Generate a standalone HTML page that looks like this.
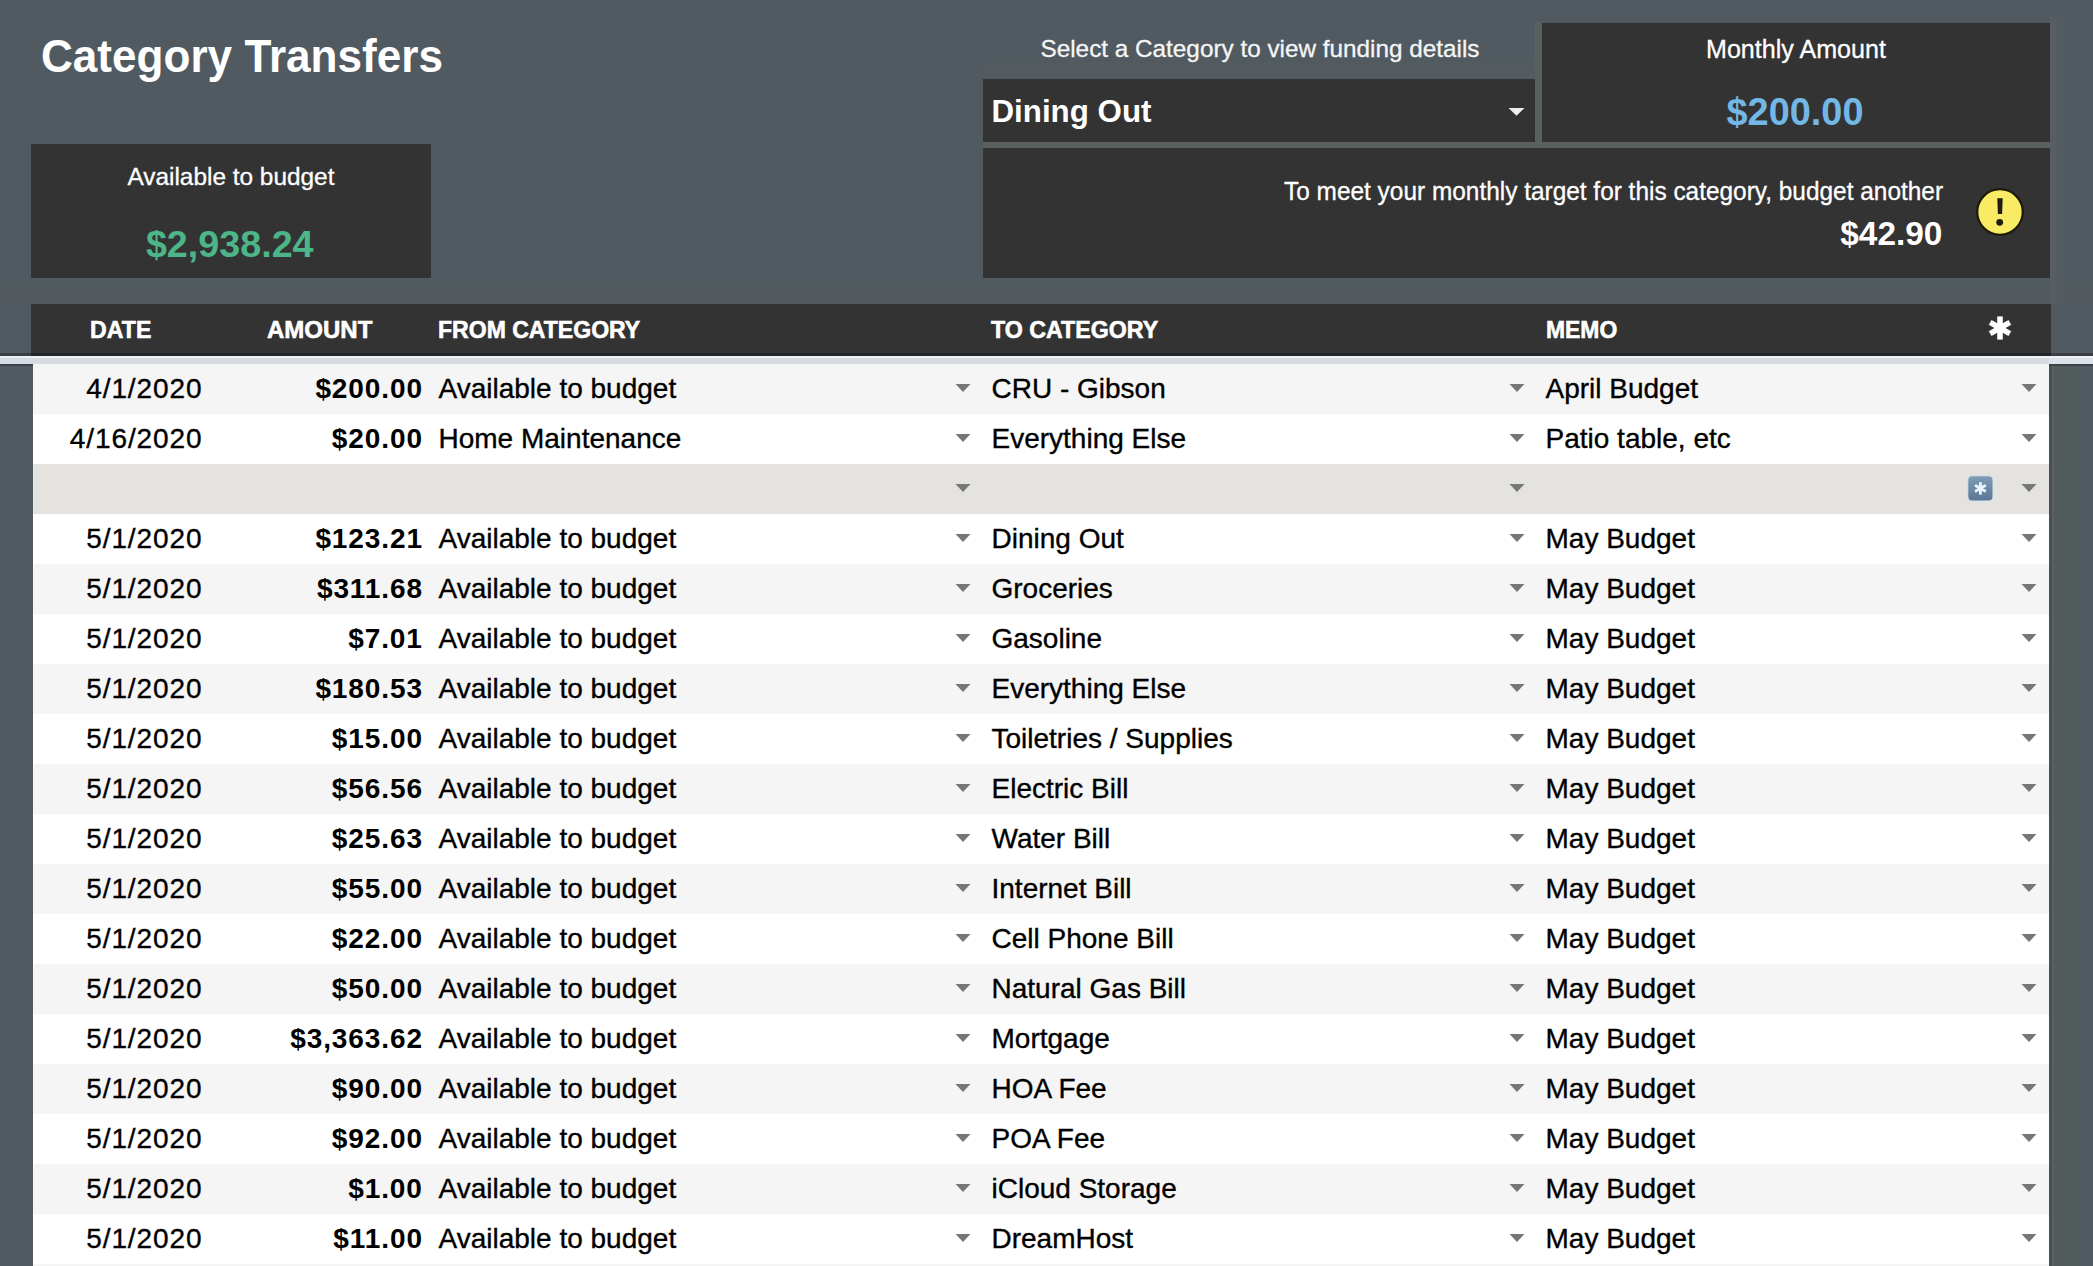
<!DOCTYPE html>
<html><head><meta charset="utf-8"><style>
html,body{margin:0;padding:0;}
body{width:2093px;height:1266px;background:#525a61;position:relative;overflow:hidden;font-family:"Liberation Sans",sans-serif;}
.t{position:absolute;white-space:nowrap;}
</style></head><body>
<div style="position:absolute;left:0px;top:286px;width:2093px;height:18px;background:#525a5e;"></div>
<div class="t" style="left:40.60px;top:33.84px;font-size:45.9px;line-height:45.9px;font-weight:bold;color:#ffffff;transform:scaleX(0.9609);transform-origin:0 0;">Category Transfers</div>
<div style="position:absolute;left:31px;top:144px;width:400px;height:134px;background:#333333;"></div>
<div class="t" style="left:127.42px;top:164.94px;font-size:24.4px;line-height:24.4px;font-weight:normal;color:#ffffff;-webkit-text-stroke:0.3px #fff;">Available to budget</div>
<div class="t" style="left:145.92px;top:225.88px;font-size:37.7px;line-height:37.7px;font-weight:bold;color:#4cb689;">$2,938.24</div>
<div style="position:absolute;left:983px;top:62px;width:552px;height:16px;background:#535b5e;"></div>
<div class="t" style="left:1040.51px;top:37.43px;font-size:24.3px;line-height:24.3px;font-weight:normal;color:#f4f6f6;-webkit-text-stroke:0.3px #f4f6f6;">Select a Category to view funding details</div>
<div style="position:absolute;left:2050px;top:17px;width:6px;height:287px;background:#585f64;"></div>
<div style="position:absolute;left:2056px;top:17px;width:8px;height:287px;background:#525b5e;"></div>
<div style="position:absolute;left:1535px;top:22px;width:7px;height:126px;background:#596061;"></div>
<div style="position:absolute;left:983px;top:141px;width:1067px;height:7px;background:#5a5f60;"></div>
<div style="position:absolute;left:983px;top:78.5px;width:552px;height:63.0px;background:#333333;"></div>
<div class="t" style="left:991.50px;top:95.50px;font-size:31.3px;line-height:31.3px;font-weight:bold;color:#ffffff;">Dining Out</div>
<svg style="position:absolute;left:1508px;top:108px" width="18" height="9"><path d="M0.5 0 L16.5 0 L8.5 7.8 Z" fill="#eeeeee"/></svg>
<div style="position:absolute;left:1541.7px;top:22.5px;width:508.29999999999995px;height:119.0px;background:#333333;"></div>
<div class="t" style="left:1706.02px;top:37.35px;font-size:25.1px;line-height:25.1px;font-weight:normal;color:#ffffff;-webkit-text-stroke:0.3px #fff;">Monthly Amount</div>
<div class="t" style="left:1726.50px;top:93.91px;font-size:37.9px;line-height:37.9px;font-weight:bold;color:#72b7e6;">$200.00</div>
<div style="position:absolute;left:983px;top:148px;width:1067px;height:130px;background:#333333;"></div>
<div class="t" style="left:1283.90px;top:178.66px;font-size:25.2px;line-height:25.2px;font-weight:normal;color:#ffffff;transform:scaleX(0.9692);transform-origin:0 0;-webkit-text-stroke:0.3px #fff;">To meet your monthly target for this category, budget another</div>
<div class="t" style="left:1840.30px;top:217.32px;font-size:33.4px;line-height:33.4px;font-weight:bold;color:#ffffff;">$42.90</div>
<svg style="position:absolute;left:1974px;top:186px" width="52" height="52" viewBox="0 0 52 52"><circle cx="26" cy="26" r="22.8" fill="#f9eb63" stroke="#1f1b08" stroke-width="2.3"/><path d="M23.3 12.2 L28.7 12.2 L28.1 27.9 L23.9 27.9 Z" fill="#1e1c10"/><circle cx="25.7" cy="36.3" r="3.4" fill="#1e1c10"/></svg>
<div style="position:absolute;left:31px;top:304px;width:2020px;height:49px;background:#333333;"></div>
<div class="t" style="left:89.60px;top:317.89px;font-size:24.1px;line-height:24.1px;font-weight:bold;color:#ffffff;transform:scaleX(0.9614);transform-origin:0 0;-webkit-text-stroke:0.6px #fff;">DATE</div>
<div class="t" style="left:266.60px;top:317.89px;font-size:24.1px;line-height:24.1px;font-weight:bold;color:#ffffff;transform:scaleX(0.9962);transform-origin:0 0;-webkit-text-stroke:0.6px #fff;">AMOUNT</div>
<div class="t" style="left:437.50px;top:317.89px;font-size:24.1px;line-height:24.1px;font-weight:bold;color:#ffffff;transform:scaleX(0.9561);transform-origin:0 0;-webkit-text-stroke:0.6px #fff;">FROM CATEGORY</div>
<div class="t" style="left:991.40px;top:317.89px;font-size:24.1px;line-height:24.1px;font-weight:bold;color:#ffffff;transform:scaleX(0.9629);transform-origin:0 0;-webkit-text-stroke:0.6px #fff;">TO CATEGORY</div>
<div class="t" style="left:1546.00px;top:317.89px;font-size:24.1px;line-height:24.1px;font-weight:bold;color:#ffffff;transform:scaleX(0.9500);transform-origin:0 0;-webkit-text-stroke:0.6px #fff;">MEMO</div>
<svg style="position:absolute;left:1987px;top:315.2px" width="26" height="26" viewBox="0 0 26 26"><g stroke="#fff" stroke-width="5.6" stroke-linecap="butt"><line x1="13" y1="1.4" x2="13" y2="24.6"/><line x1="3.2" y1="7.4" x2="22.8" y2="18.6"/><line x1="3.2" y1="18.6" x2="22.8" y2="7.4"/></g></svg>
<div style="position:absolute;left:0px;top:353px;width:2093px;height:3px;background:#3a3f44;"></div>
<div style="position:absolute;left:31px;top:353px;width:2020px;height:3px;background:#222528;"></div>
<div style="position:absolute;left:0px;top:356px;width:2093px;height:2px;background:#eef0f4;"></div>
<div style="position:absolute;left:0px;top:358px;width:2093px;height:6px;background:#d7dbe0;"></div>
<div style="position:absolute;left:0px;top:358px;width:33px;height:6px;background:#d6dce4;"></div>
<div style="position:absolute;left:2049px;top:358px;width:44px;height:6px;background:#dde2ea;"></div>
<div style="position:absolute;left:0px;top:364px;width:33px;height:2px;background:#3c4249;"></div>
<div style="position:absolute;left:2049px;top:364px;width:44px;height:2px;background:#3c4249;"></div>
<div style="position:absolute;left:2049px;top:366px;width:3px;height:900px;background:#475053;"></div>
<div style="position:absolute;left:2052px;top:366px;width:2px;height:900px;background:#59625f;"></div>
<div style="position:absolute;left:2054px;top:366px;width:26px;height:900px;background:#525b5b;"></div>
<div style="position:absolute;left:33px;top:364px;width:2016px;height:902px;background:#ffffff;"></div>
<div style="position:absolute;left:33px;top:364px;width:2016px;height:50px;background:#f5f5f5;"></div>
<div class="t" style="left:86.24px;top:374.59px;font-size:28.0px;line-height:28.0px;font-weight:normal;color:#000;-webkit-text-stroke:0.35px #000;letter-spacing:0.9px;">4/1/2020</div>
<div class="t" style="left:315.38px;top:374.59px;font-size:28.0px;line-height:28.0px;font-weight:bold;color:#000;letter-spacing:0.9px;">$200.00</div>
<div class="t" style="left:438.50px;top:374.59px;font-size:28.0px;line-height:28.0px;font-weight:normal;color:#000;-webkit-text-stroke:0.35px #000;">Available to budget</div>
<div class="t" style="left:991.50px;top:374.59px;font-size:28.0px;line-height:28.0px;font-weight:normal;color:#000;-webkit-text-stroke:0.35px #000;">CRU - Gibson</div>
<div class="t" style="left:1545.50px;top:374.59px;font-size:28.0px;line-height:28.0px;font-weight:normal;color:#000;-webkit-text-stroke:0.35px #000;">April Budget</div>
<svg style="position:absolute;left:954.8px;top:384px" width="16" height="9"><path d="M0.5 0 L15.5 0 L8 8 Z" fill="#777777"/></svg>
<svg style="position:absolute;left:1509px;top:384px" width="16" height="9"><path d="M0.5 0 L15.5 0 L8 8 Z" fill="#777777"/></svg>
<svg style="position:absolute;left:2021px;top:384px" width="16" height="9"><path d="M0.5 0 L15.5 0 L8 8 Z" fill="#777777"/></svg>
<div class="t" style="left:69.80px;top:424.59px;font-size:28.0px;line-height:28.0px;font-weight:normal;color:#000;-webkit-text-stroke:0.35px #000;letter-spacing:0.9px;">4/16/2020</div>
<div class="t" style="left:331.82px;top:424.59px;font-size:28.0px;line-height:28.0px;font-weight:bold;color:#000;letter-spacing:0.9px;">$20.00</div>
<div class="t" style="left:438.50px;top:424.59px;font-size:28.0px;line-height:28.0px;font-weight:normal;color:#000;-webkit-text-stroke:0.35px #000;">Home Maintenance</div>
<div class="t" style="left:991.50px;top:424.59px;font-size:28.0px;line-height:28.0px;font-weight:normal;color:#000;-webkit-text-stroke:0.35px #000;">Everything Else</div>
<div class="t" style="left:1545.50px;top:424.59px;font-size:28.0px;line-height:28.0px;font-weight:normal;color:#000;-webkit-text-stroke:0.35px #000;">Patio table, etc</div>
<svg style="position:absolute;left:954.8px;top:434px" width="16" height="9"><path d="M0.5 0 L15.5 0 L8 8 Z" fill="#777777"/></svg>
<svg style="position:absolute;left:1509px;top:434px" width="16" height="9"><path d="M0.5 0 L15.5 0 L8 8 Z" fill="#777777"/></svg>
<svg style="position:absolute;left:2021px;top:434px" width="16" height="9"><path d="M0.5 0 L15.5 0 L8 8 Z" fill="#777777"/></svg>
<div style="position:absolute;left:33px;top:464px;width:2016px;height:50px;background:#e5e3e0;"></div>
<svg style="position:absolute;left:954.8px;top:484px" width="16" height="9"><path d="M0.5 0 L15.5 0 L8 8 Z" fill="#777777"/></svg>
<svg style="position:absolute;left:1509px;top:484px" width="16" height="9"><path d="M0.5 0 L15.5 0 L8 8 Z" fill="#777777"/></svg>
<svg style="position:absolute;left:2021px;top:484px" width="16" height="9"><path d="M0.5 0 L15.5 0 L8 8 Z" fill="#777777"/></svg>
<svg style="position:absolute;left:1967px;top:475px" width="27" height="27" viewBox="0 0 27 27"><defs><linearGradient id="bg" x1="0" y1="0" x2="0" y2="1"><stop offset="0" stop-color="#7f9cb9"/><stop offset="1" stop-color="#5b7694"/></linearGradient></defs><rect x="0.8" y="0.8" width="25.2" height="25.2" rx="4" fill="url(#bg)" stroke="#d7e4ec" stroke-width="1"/><g stroke="#e8f6fa" stroke-width="2.8" stroke-linecap="butt"><line x1="13.4" y1="7.2" x2="13.4" y2="19.6"/><line x1="8.0" y1="10.3" x2="18.8" y2="16.5"/><line x1="8.0" y1="16.5" x2="18.8" y2="10.3"/></g></svg>
<div class="t" style="left:86.24px;top:524.59px;font-size:28.0px;line-height:28.0px;font-weight:normal;color:#000;-webkit-text-stroke:0.35px #000;letter-spacing:0.9px;">5/1/2020</div>
<div class="t" style="left:315.38px;top:524.59px;font-size:28.0px;line-height:28.0px;font-weight:bold;color:#000;letter-spacing:0.9px;">$123.21</div>
<div class="t" style="left:438.50px;top:524.59px;font-size:28.0px;line-height:28.0px;font-weight:normal;color:#000;-webkit-text-stroke:0.35px #000;">Available to budget</div>
<div class="t" style="left:991.50px;top:524.59px;font-size:28.0px;line-height:28.0px;font-weight:normal;color:#000;-webkit-text-stroke:0.35px #000;">Dining Out</div>
<div class="t" style="left:1545.50px;top:524.59px;font-size:28.0px;line-height:28.0px;font-weight:normal;color:#000;-webkit-text-stroke:0.35px #000;">May Budget</div>
<svg style="position:absolute;left:954.8px;top:534px" width="16" height="9"><path d="M0.5 0 L15.5 0 L8 8 Z" fill="#777777"/></svg>
<svg style="position:absolute;left:1509px;top:534px" width="16" height="9"><path d="M0.5 0 L15.5 0 L8 8 Z" fill="#777777"/></svg>
<svg style="position:absolute;left:2021px;top:534px" width="16" height="9"><path d="M0.5 0 L15.5 0 L8 8 Z" fill="#777777"/></svg>
<div style="position:absolute;left:33px;top:564px;width:2016px;height:50px;background:#f5f5f5;"></div>
<div class="t" style="left:86.24px;top:574.59px;font-size:28.0px;line-height:28.0px;font-weight:normal;color:#000;-webkit-text-stroke:0.35px #000;letter-spacing:0.9px;">5/1/2020</div>
<div class="t" style="left:316.92px;top:574.59px;font-size:28.0px;line-height:28.0px;font-weight:bold;color:#000;letter-spacing:0.9px;">$311.68</div>
<div class="t" style="left:438.50px;top:574.59px;font-size:28.0px;line-height:28.0px;font-weight:normal;color:#000;-webkit-text-stroke:0.35px #000;">Available to budget</div>
<div class="t" style="left:991.50px;top:574.59px;font-size:28.0px;line-height:28.0px;font-weight:normal;color:#000;-webkit-text-stroke:0.35px #000;">Groceries</div>
<div class="t" style="left:1545.50px;top:574.59px;font-size:28.0px;line-height:28.0px;font-weight:normal;color:#000;-webkit-text-stroke:0.35px #000;">May Budget</div>
<svg style="position:absolute;left:954.8px;top:584px" width="16" height="9"><path d="M0.5 0 L15.5 0 L8 8 Z" fill="#777777"/></svg>
<svg style="position:absolute;left:1509px;top:584px" width="16" height="9"><path d="M0.5 0 L15.5 0 L8 8 Z" fill="#777777"/></svg>
<svg style="position:absolute;left:2021px;top:584px" width="16" height="9"><path d="M0.5 0 L15.5 0 L8 8 Z" fill="#777777"/></svg>
<div class="t" style="left:86.24px;top:624.59px;font-size:28.0px;line-height:28.0px;font-weight:normal;color:#000;-webkit-text-stroke:0.35px #000;letter-spacing:0.9px;">5/1/2020</div>
<div class="t" style="left:348.26px;top:624.59px;font-size:28.0px;line-height:28.0px;font-weight:bold;color:#000;letter-spacing:0.9px;">$7.01</div>
<div class="t" style="left:438.50px;top:624.59px;font-size:28.0px;line-height:28.0px;font-weight:normal;color:#000;-webkit-text-stroke:0.35px #000;">Available to budget</div>
<div class="t" style="left:991.50px;top:624.59px;font-size:28.0px;line-height:28.0px;font-weight:normal;color:#000;-webkit-text-stroke:0.35px #000;">Gasoline</div>
<div class="t" style="left:1545.50px;top:624.59px;font-size:28.0px;line-height:28.0px;font-weight:normal;color:#000;-webkit-text-stroke:0.35px #000;">May Budget</div>
<svg style="position:absolute;left:954.8px;top:634px" width="16" height="9"><path d="M0.5 0 L15.5 0 L8 8 Z" fill="#777777"/></svg>
<svg style="position:absolute;left:1509px;top:634px" width="16" height="9"><path d="M0.5 0 L15.5 0 L8 8 Z" fill="#777777"/></svg>
<svg style="position:absolute;left:2021px;top:634px" width="16" height="9"><path d="M0.5 0 L15.5 0 L8 8 Z" fill="#777777"/></svg>
<div style="position:absolute;left:33px;top:664px;width:2016px;height:50px;background:#f5f5f5;"></div>
<div class="t" style="left:86.24px;top:674.59px;font-size:28.0px;line-height:28.0px;font-weight:normal;color:#000;-webkit-text-stroke:0.35px #000;letter-spacing:0.9px;">5/1/2020</div>
<div class="t" style="left:315.38px;top:674.59px;font-size:28.0px;line-height:28.0px;font-weight:bold;color:#000;letter-spacing:0.9px;">$180.53</div>
<div class="t" style="left:438.50px;top:674.59px;font-size:28.0px;line-height:28.0px;font-weight:normal;color:#000;-webkit-text-stroke:0.35px #000;">Available to budget</div>
<div class="t" style="left:991.50px;top:674.59px;font-size:28.0px;line-height:28.0px;font-weight:normal;color:#000;-webkit-text-stroke:0.35px #000;">Everything Else</div>
<div class="t" style="left:1545.50px;top:674.59px;font-size:28.0px;line-height:28.0px;font-weight:normal;color:#000;-webkit-text-stroke:0.35px #000;">May Budget</div>
<svg style="position:absolute;left:954.8px;top:684px" width="16" height="9"><path d="M0.5 0 L15.5 0 L8 8 Z" fill="#777777"/></svg>
<svg style="position:absolute;left:1509px;top:684px" width="16" height="9"><path d="M0.5 0 L15.5 0 L8 8 Z" fill="#777777"/></svg>
<svg style="position:absolute;left:2021px;top:684px" width="16" height="9"><path d="M0.5 0 L15.5 0 L8 8 Z" fill="#777777"/></svg>
<div class="t" style="left:86.24px;top:724.59px;font-size:28.0px;line-height:28.0px;font-weight:normal;color:#000;-webkit-text-stroke:0.35px #000;letter-spacing:0.9px;">5/1/2020</div>
<div class="t" style="left:331.82px;top:724.59px;font-size:28.0px;line-height:28.0px;font-weight:bold;color:#000;letter-spacing:0.9px;">$15.00</div>
<div class="t" style="left:438.50px;top:724.59px;font-size:28.0px;line-height:28.0px;font-weight:normal;color:#000;-webkit-text-stroke:0.35px #000;">Available to budget</div>
<div class="t" style="left:991.50px;top:724.59px;font-size:28.0px;line-height:28.0px;font-weight:normal;color:#000;-webkit-text-stroke:0.35px #000;">Toiletries / Supplies</div>
<div class="t" style="left:1545.50px;top:724.59px;font-size:28.0px;line-height:28.0px;font-weight:normal;color:#000;-webkit-text-stroke:0.35px #000;">May Budget</div>
<svg style="position:absolute;left:954.8px;top:734px" width="16" height="9"><path d="M0.5 0 L15.5 0 L8 8 Z" fill="#777777"/></svg>
<svg style="position:absolute;left:1509px;top:734px" width="16" height="9"><path d="M0.5 0 L15.5 0 L8 8 Z" fill="#777777"/></svg>
<svg style="position:absolute;left:2021px;top:734px" width="16" height="9"><path d="M0.5 0 L15.5 0 L8 8 Z" fill="#777777"/></svg>
<div style="position:absolute;left:33px;top:764px;width:2016px;height:50px;background:#f5f5f5;"></div>
<div class="t" style="left:86.24px;top:774.59px;font-size:28.0px;line-height:28.0px;font-weight:normal;color:#000;-webkit-text-stroke:0.35px #000;letter-spacing:0.9px;">5/1/2020</div>
<div class="t" style="left:331.82px;top:774.59px;font-size:28.0px;line-height:28.0px;font-weight:bold;color:#000;letter-spacing:0.9px;">$56.56</div>
<div class="t" style="left:438.50px;top:774.59px;font-size:28.0px;line-height:28.0px;font-weight:normal;color:#000;-webkit-text-stroke:0.35px #000;">Available to budget</div>
<div class="t" style="left:991.50px;top:774.59px;font-size:28.0px;line-height:28.0px;font-weight:normal;color:#000;-webkit-text-stroke:0.35px #000;">Electric Bill</div>
<div class="t" style="left:1545.50px;top:774.59px;font-size:28.0px;line-height:28.0px;font-weight:normal;color:#000;-webkit-text-stroke:0.35px #000;">May Budget</div>
<svg style="position:absolute;left:954.8px;top:784px" width="16" height="9"><path d="M0.5 0 L15.5 0 L8 8 Z" fill="#777777"/></svg>
<svg style="position:absolute;left:1509px;top:784px" width="16" height="9"><path d="M0.5 0 L15.5 0 L8 8 Z" fill="#777777"/></svg>
<svg style="position:absolute;left:2021px;top:784px" width="16" height="9"><path d="M0.5 0 L15.5 0 L8 8 Z" fill="#777777"/></svg>
<div class="t" style="left:86.24px;top:824.59px;font-size:28.0px;line-height:28.0px;font-weight:normal;color:#000;-webkit-text-stroke:0.35px #000;letter-spacing:0.9px;">5/1/2020</div>
<div class="t" style="left:331.82px;top:824.59px;font-size:28.0px;line-height:28.0px;font-weight:bold;color:#000;letter-spacing:0.9px;">$25.63</div>
<div class="t" style="left:438.50px;top:824.59px;font-size:28.0px;line-height:28.0px;font-weight:normal;color:#000;-webkit-text-stroke:0.35px #000;">Available to budget</div>
<div class="t" style="left:991.50px;top:824.59px;font-size:28.0px;line-height:28.0px;font-weight:normal;color:#000;-webkit-text-stroke:0.35px #000;">Water Bill</div>
<div class="t" style="left:1545.50px;top:824.59px;font-size:28.0px;line-height:28.0px;font-weight:normal;color:#000;-webkit-text-stroke:0.35px #000;">May Budget</div>
<svg style="position:absolute;left:954.8px;top:834px" width="16" height="9"><path d="M0.5 0 L15.5 0 L8 8 Z" fill="#777777"/></svg>
<svg style="position:absolute;left:1509px;top:834px" width="16" height="9"><path d="M0.5 0 L15.5 0 L8 8 Z" fill="#777777"/></svg>
<svg style="position:absolute;left:2021px;top:834px" width="16" height="9"><path d="M0.5 0 L15.5 0 L8 8 Z" fill="#777777"/></svg>
<div style="position:absolute;left:33px;top:864px;width:2016px;height:50px;background:#f5f5f5;"></div>
<div class="t" style="left:86.24px;top:874.59px;font-size:28.0px;line-height:28.0px;font-weight:normal;color:#000;-webkit-text-stroke:0.35px #000;letter-spacing:0.9px;">5/1/2020</div>
<div class="t" style="left:331.82px;top:874.59px;font-size:28.0px;line-height:28.0px;font-weight:bold;color:#000;letter-spacing:0.9px;">$55.00</div>
<div class="t" style="left:438.50px;top:874.59px;font-size:28.0px;line-height:28.0px;font-weight:normal;color:#000;-webkit-text-stroke:0.35px #000;">Available to budget</div>
<div class="t" style="left:991.50px;top:874.59px;font-size:28.0px;line-height:28.0px;font-weight:normal;color:#000;-webkit-text-stroke:0.35px #000;">Internet Bill</div>
<div class="t" style="left:1545.50px;top:874.59px;font-size:28.0px;line-height:28.0px;font-weight:normal;color:#000;-webkit-text-stroke:0.35px #000;">May Budget</div>
<svg style="position:absolute;left:954.8px;top:884px" width="16" height="9"><path d="M0.5 0 L15.5 0 L8 8 Z" fill="#777777"/></svg>
<svg style="position:absolute;left:1509px;top:884px" width="16" height="9"><path d="M0.5 0 L15.5 0 L8 8 Z" fill="#777777"/></svg>
<svg style="position:absolute;left:2021px;top:884px" width="16" height="9"><path d="M0.5 0 L15.5 0 L8 8 Z" fill="#777777"/></svg>
<div class="t" style="left:86.24px;top:924.59px;font-size:28.0px;line-height:28.0px;font-weight:normal;color:#000;-webkit-text-stroke:0.35px #000;letter-spacing:0.9px;">5/1/2020</div>
<div class="t" style="left:331.82px;top:924.59px;font-size:28.0px;line-height:28.0px;font-weight:bold;color:#000;letter-spacing:0.9px;">$22.00</div>
<div class="t" style="left:438.50px;top:924.59px;font-size:28.0px;line-height:28.0px;font-weight:normal;color:#000;-webkit-text-stroke:0.35px #000;">Available to budget</div>
<div class="t" style="left:991.50px;top:924.59px;font-size:28.0px;line-height:28.0px;font-weight:normal;color:#000;-webkit-text-stroke:0.35px #000;">Cell Phone Bill</div>
<div class="t" style="left:1545.50px;top:924.59px;font-size:28.0px;line-height:28.0px;font-weight:normal;color:#000;-webkit-text-stroke:0.35px #000;">May Budget</div>
<svg style="position:absolute;left:954.8px;top:934px" width="16" height="9"><path d="M0.5 0 L15.5 0 L8 8 Z" fill="#777777"/></svg>
<svg style="position:absolute;left:1509px;top:934px" width="16" height="9"><path d="M0.5 0 L15.5 0 L8 8 Z" fill="#777777"/></svg>
<svg style="position:absolute;left:2021px;top:934px" width="16" height="9"><path d="M0.5 0 L15.5 0 L8 8 Z" fill="#777777"/></svg>
<div style="position:absolute;left:33px;top:964px;width:2016px;height:50px;background:#f5f5f5;"></div>
<div class="t" style="left:86.24px;top:974.59px;font-size:28.0px;line-height:28.0px;font-weight:normal;color:#000;-webkit-text-stroke:0.35px #000;letter-spacing:0.9px;">5/1/2020</div>
<div class="t" style="left:331.82px;top:974.59px;font-size:28.0px;line-height:28.0px;font-weight:bold;color:#000;letter-spacing:0.9px;">$50.00</div>
<div class="t" style="left:438.50px;top:974.59px;font-size:28.0px;line-height:28.0px;font-weight:normal;color:#000;-webkit-text-stroke:0.35px #000;">Available to budget</div>
<div class="t" style="left:991.50px;top:974.59px;font-size:28.0px;line-height:28.0px;font-weight:normal;color:#000;-webkit-text-stroke:0.35px #000;">Natural Gas Bill</div>
<div class="t" style="left:1545.50px;top:974.59px;font-size:28.0px;line-height:28.0px;font-weight:normal;color:#000;-webkit-text-stroke:0.35px #000;">May Budget</div>
<svg style="position:absolute;left:954.8px;top:984px" width="16" height="9"><path d="M0.5 0 L15.5 0 L8 8 Z" fill="#777777"/></svg>
<svg style="position:absolute;left:1509px;top:984px" width="16" height="9"><path d="M0.5 0 L15.5 0 L8 8 Z" fill="#777777"/></svg>
<svg style="position:absolute;left:2021px;top:984px" width="16" height="9"><path d="M0.5 0 L15.5 0 L8 8 Z" fill="#777777"/></svg>
<div class="t" style="left:86.24px;top:1024.59px;font-size:28.0px;line-height:28.0px;font-weight:normal;color:#000;-webkit-text-stroke:0.35px #000;letter-spacing:0.9px;">5/1/2020</div>
<div class="t" style="left:290.20px;top:1024.59px;font-size:28.0px;line-height:28.0px;font-weight:bold;color:#000;letter-spacing:0.9px;">$3,363.62</div>
<div class="t" style="left:438.50px;top:1024.59px;font-size:28.0px;line-height:28.0px;font-weight:normal;color:#000;-webkit-text-stroke:0.35px #000;">Available to budget</div>
<div class="t" style="left:991.50px;top:1024.59px;font-size:28.0px;line-height:28.0px;font-weight:normal;color:#000;-webkit-text-stroke:0.35px #000;">Mortgage</div>
<div class="t" style="left:1545.50px;top:1024.59px;font-size:28.0px;line-height:28.0px;font-weight:normal;color:#000;-webkit-text-stroke:0.35px #000;">May Budget</div>
<svg style="position:absolute;left:954.8px;top:1034px" width="16" height="9"><path d="M0.5 0 L15.5 0 L8 8 Z" fill="#777777"/></svg>
<svg style="position:absolute;left:1509px;top:1034px" width="16" height="9"><path d="M0.5 0 L15.5 0 L8 8 Z" fill="#777777"/></svg>
<svg style="position:absolute;left:2021px;top:1034px" width="16" height="9"><path d="M0.5 0 L15.5 0 L8 8 Z" fill="#777777"/></svg>
<div style="position:absolute;left:33px;top:1064px;width:2016px;height:50px;background:#f5f5f5;"></div>
<div class="t" style="left:86.24px;top:1074.59px;font-size:28.0px;line-height:28.0px;font-weight:normal;color:#000;-webkit-text-stroke:0.35px #000;letter-spacing:0.9px;">5/1/2020</div>
<div class="t" style="left:331.82px;top:1074.59px;font-size:28.0px;line-height:28.0px;font-weight:bold;color:#000;letter-spacing:0.9px;">$90.00</div>
<div class="t" style="left:438.50px;top:1074.59px;font-size:28.0px;line-height:28.0px;font-weight:normal;color:#000;-webkit-text-stroke:0.35px #000;">Available to budget</div>
<div class="t" style="left:991.50px;top:1074.59px;font-size:28.0px;line-height:28.0px;font-weight:normal;color:#000;-webkit-text-stroke:0.35px #000;">HOA Fee</div>
<div class="t" style="left:1545.50px;top:1074.59px;font-size:28.0px;line-height:28.0px;font-weight:normal;color:#000;-webkit-text-stroke:0.35px #000;">May Budget</div>
<svg style="position:absolute;left:954.8px;top:1084px" width="16" height="9"><path d="M0.5 0 L15.5 0 L8 8 Z" fill="#777777"/></svg>
<svg style="position:absolute;left:1509px;top:1084px" width="16" height="9"><path d="M0.5 0 L15.5 0 L8 8 Z" fill="#777777"/></svg>
<svg style="position:absolute;left:2021px;top:1084px" width="16" height="9"><path d="M0.5 0 L15.5 0 L8 8 Z" fill="#777777"/></svg>
<div class="t" style="left:86.24px;top:1124.59px;font-size:28.0px;line-height:28.0px;font-weight:normal;color:#000;-webkit-text-stroke:0.35px #000;letter-spacing:0.9px;">5/1/2020</div>
<div class="t" style="left:331.82px;top:1124.59px;font-size:28.0px;line-height:28.0px;font-weight:bold;color:#000;letter-spacing:0.9px;">$92.00</div>
<div class="t" style="left:438.50px;top:1124.59px;font-size:28.0px;line-height:28.0px;font-weight:normal;color:#000;-webkit-text-stroke:0.35px #000;">Available to budget</div>
<div class="t" style="left:991.50px;top:1124.59px;font-size:28.0px;line-height:28.0px;font-weight:normal;color:#000;-webkit-text-stroke:0.35px #000;">POA Fee</div>
<div class="t" style="left:1545.50px;top:1124.59px;font-size:28.0px;line-height:28.0px;font-weight:normal;color:#000;-webkit-text-stroke:0.35px #000;">May Budget</div>
<svg style="position:absolute;left:954.8px;top:1134px" width="16" height="9"><path d="M0.5 0 L15.5 0 L8 8 Z" fill="#777777"/></svg>
<svg style="position:absolute;left:1509px;top:1134px" width="16" height="9"><path d="M0.5 0 L15.5 0 L8 8 Z" fill="#777777"/></svg>
<svg style="position:absolute;left:2021px;top:1134px" width="16" height="9"><path d="M0.5 0 L15.5 0 L8 8 Z" fill="#777777"/></svg>
<div style="position:absolute;left:33px;top:1164px;width:2016px;height:50px;background:#f5f5f5;"></div>
<div class="t" style="left:86.24px;top:1174.59px;font-size:28.0px;line-height:28.0px;font-weight:normal;color:#000;-webkit-text-stroke:0.35px #000;letter-spacing:0.9px;">5/1/2020</div>
<div class="t" style="left:348.26px;top:1174.59px;font-size:28.0px;line-height:28.0px;font-weight:bold;color:#000;letter-spacing:0.9px;">$1.00</div>
<div class="t" style="left:438.50px;top:1174.59px;font-size:28.0px;line-height:28.0px;font-weight:normal;color:#000;-webkit-text-stroke:0.35px #000;">Available to budget</div>
<div class="t" style="left:991.50px;top:1174.59px;font-size:28.0px;line-height:28.0px;font-weight:normal;color:#000;-webkit-text-stroke:0.35px #000;">iCloud Storage</div>
<div class="t" style="left:1545.50px;top:1174.59px;font-size:28.0px;line-height:28.0px;font-weight:normal;color:#000;-webkit-text-stroke:0.35px #000;">May Budget</div>
<svg style="position:absolute;left:954.8px;top:1184px" width="16" height="9"><path d="M0.5 0 L15.5 0 L8 8 Z" fill="#777777"/></svg>
<svg style="position:absolute;left:1509px;top:1184px" width="16" height="9"><path d="M0.5 0 L15.5 0 L8 8 Z" fill="#777777"/></svg>
<svg style="position:absolute;left:2021px;top:1184px" width="16" height="9"><path d="M0.5 0 L15.5 0 L8 8 Z" fill="#777777"/></svg>
<div class="t" style="left:86.24px;top:1224.59px;font-size:28.0px;line-height:28.0px;font-weight:normal;color:#000;-webkit-text-stroke:0.35px #000;letter-spacing:0.9px;">5/1/2020</div>
<div class="t" style="left:333.36px;top:1224.59px;font-size:28.0px;line-height:28.0px;font-weight:bold;color:#000;letter-spacing:0.9px;">$11.00</div>
<div class="t" style="left:438.50px;top:1224.59px;font-size:28.0px;line-height:28.0px;font-weight:normal;color:#000;-webkit-text-stroke:0.35px #000;">Available to budget</div>
<div class="t" style="left:991.50px;top:1224.59px;font-size:28.0px;line-height:28.0px;font-weight:normal;color:#000;-webkit-text-stroke:0.35px #000;">DreamHost</div>
<div class="t" style="left:1545.50px;top:1224.59px;font-size:28.0px;line-height:28.0px;font-weight:normal;color:#000;-webkit-text-stroke:0.35px #000;">May Budget</div>
<svg style="position:absolute;left:954.8px;top:1234px" width="16" height="9"><path d="M0.5 0 L15.5 0 L8 8 Z" fill="#777777"/></svg>
<svg style="position:absolute;left:1509px;top:1234px" width="16" height="9"><path d="M0.5 0 L15.5 0 L8 8 Z" fill="#777777"/></svg>
<svg style="position:absolute;left:2021px;top:1234px" width="16" height="9"><path d="M0.5 0 L15.5 0 L8 8 Z" fill="#777777"/></svg>
<div style="position:absolute;left:33px;top:1264px;width:2016px;height:2px;background:#f5f5f5;"></div>
</body></html>
